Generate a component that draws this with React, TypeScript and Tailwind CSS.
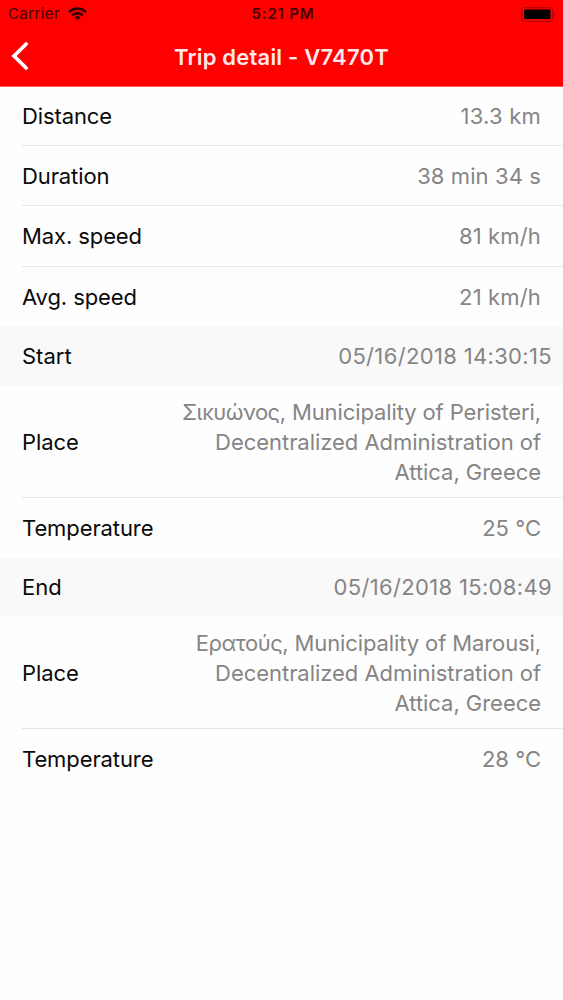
type RowProps = {
  label: string;
  value: string[];
  box: string;
  locality?: string;
  tracking?: string;
};

const detailRows: RowProps[] = [
  { label: "Distance", value: ["13.3 km"], box: "h-[59px] border-b", tracking: "tracking-[0.22px]" },
  { label: "Duration", value: ["38 min 34 s"], box: "h-[60px] border-b", tracking: "tracking-[0.1px]" },
  { label: "Max. speed", value: ["81 km/h"], box: "h-[61px] border-b", tracking: "tracking-[0.15px]" },
  { label: "Avg. speed", value: ["21 km/h"], box: "h-[59px]", tracking: "tracking-[0.15px]" },
];

const startRows: RowProps[] = [
  {
    label: "Place",
    locality: "Σικυώνος",
    value: [", Municipality of Peristeri,", "Decentralized Administration of", "Attica, Greece"],
    box: "h-[112px] border-b",
    tracking: "tracking-[-0.04px] first:tracking-[-0.11px]",
  },
  { label: "Temperature", value: ["25 °C"], box: "h-[60px]" },
];

const endRows: RowProps[] = [
  {
    label: "Place",
    locality: "Ερατούς",
    value: [", Municipality of Marousi,", "Decentralized Administration of", "Attica, Greece"],
    box: "h-[113px] border-b pt-[2px]",
    tracking: "tracking-[-0.04px] first:tracking-[-0.11px]",
  },
  { label: "Temperature", value: ["28 °C"], box: "h-[60px]" },
];

function Row({ label, value, box, locality, tracking = "" }: RowProps) {
  return (
    <div className={`ml-[22px] flex shrink-0 items-center justify-between border-[#e6e6e6] pr-[22px] ${box}`}>
      <span className="tracking-[-0.1px] text-[#0a0a0a]">{label}</span>
      <div className="flex flex-col items-end text-[#858585]">
        {value.map((line, index) => (
          <span key={line} className={`whitespace-nowrap ${tracking}`}>
            {index === 0 && locality && <span className="tracking-[-0.5px]">{locality}</span>}
            {line}
          </span>
        ))}
      </div>
    </div>
  );
}

function Section({ label, value, box }: { label: string; value: string; box: string }) {
  return (
    <div className={`flex shrink-0 items-center justify-between bg-[#f9f9f9] pl-[22px] pr-[11px] ${box}`}>
      <span className="text-[#0a0a0a]">{label}</span>
      <span className="tracking-[0.34px] text-[#858585]">{value}</span>
    </div>
  );
}

export default function App() {
  return (
    <main className="flex h-[1000px] w-[563px] flex-col overflow-hidden bg-[#fefefe] font-['Inter',sans-serif] text-[22px] leading-[30px]">
      <header className="h-[87px] shrink-0 border-b border-[#f65b58] bg-[#ff0000]">
        <div className="grid h-[28px] grid-cols-[1fr_auto_1fr] items-center pl-2 pr-[7px] text-[15px] leading-5 text-[#430000]">
          <div className="flex items-center gap-[8px]">
            <span className="tracking-[0.4px]">Carrier</span>
            <svg className="h-[14px] w-[19px]" viewBox="0 0 19 14" fill="none" stroke="#350000" strokeWidth="2.7">
              <path d="M1 5.1a12 12 0 0 1 17 0" />
              <path d="M4.1 8.4a7.6 7.6 0 0 1 10.8 0" />
              <path d="M9.5 13.2 6.6 10.4a4.2 4.2 0 0 1 5.8 0Z" fill="#350000" stroke="none" />
            </svg>
          </div>
          <span className="pl-[2px] text-center font-semibold tracking-[0.8px]">5:21 PM</span>
          <svg className="h-[15px] w-[35px] justify-self-end" viewBox="0 0 35 15">
            <rect x="0.75" y="0.75" width="31" height="13.5" rx="2.5" fill="none" stroke="#a80000" strokeWidth="1" />
            <rect x="3" y="2.5" width="26.5" height="9.5" rx="1" fill="#000" />
            <path d="M33 5.5q2 2 0 4z" fill="#a80000" />
          </svg>
        </div>
        <div className="grid h-[58px] grid-cols-[1fr_auto_1fr] items-center">
          <svg className="mb-[2px] ml-[10px] h-[30px] w-[20px]" viewBox="0 0 20 30" fill="none" stroke="#fff" strokeWidth="3.7" strokeLinecap="round">
            <path d="M16.2 3 4 15 16.2 27" />
          </svg>
          <h1 className="font-semibold tracking-[0.2px] text-[#ffe9e9]">Trip detail - V7470T</h1>
        </div>
      </header>
      {detailRows.map((row) => <Row key={row.label} {...row} />)}
      <Section label="Start" value="05/16/2018 14:30:15" box="h-[60px]" />
      {startRows.map((row) => <Row key={row.label} {...row} />)}
      <Section label="End" value="05/16/2018 15:08:49" box="h-[58px]" />
      {endRows.map((row) => <Row key={row.label} {...row} />)}
    </main>
  );
}
